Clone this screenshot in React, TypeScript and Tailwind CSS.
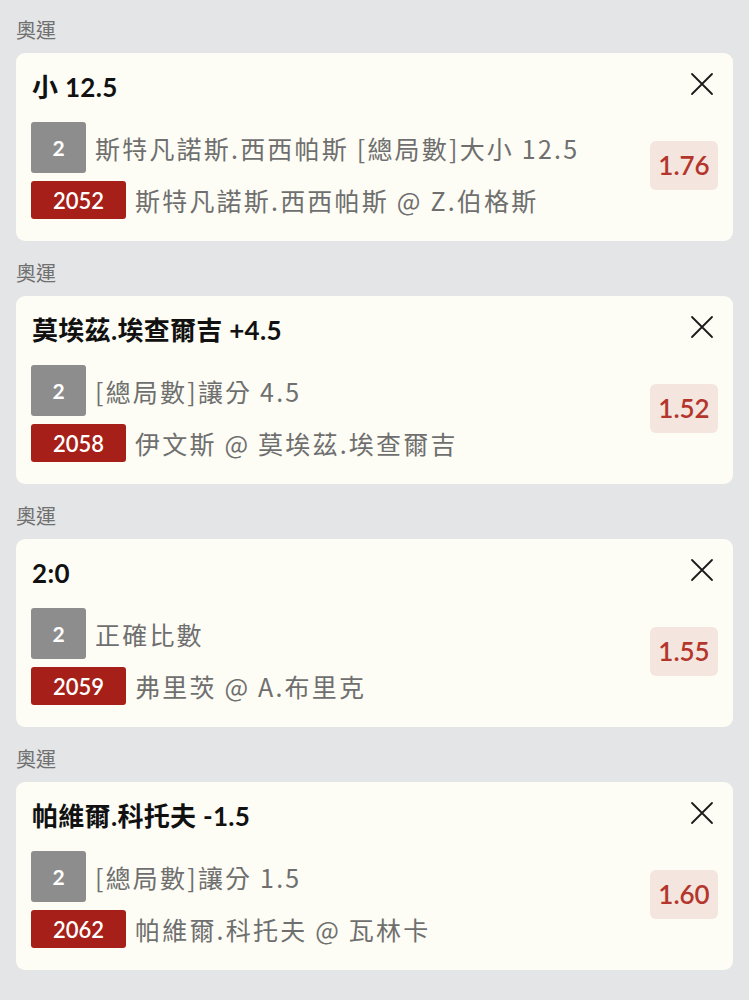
import React from "react";

type Bet = {
  title: string;
  desc: string;
  code: string;
  match: string;
  odds: string;
};

const bets: Bet[] = [
  { title: "小 12.5", desc: "斯特凡諾斯.西西帕斯 [總局數]大小 12.5", code: "2052", match: "斯特凡諾斯.西西帕斯 @ Z.伯格斯", odds: "1.76" },
  { title: "莫埃茲.埃查爾吉 +4.5", desc: "[總局數]讓分 4.5", code: "2058", match: "伊文斯 @ 莫埃茲.埃查爾吉", odds: "1.52" },
  { title: "2:0", desc: "正確比數", code: "2059", match: "弗里茨 @ A.布里克", odds: "1.55" },
  { title: "帕維爾.科托夫 -1.5", desc: "[總局數]讓分 1.5", code: "2062", match: "帕維爾.科托夫 @ 瓦林卡", odds: "1.60" },
];

const rowFont = { fontFamily: "'Noto Sans CJK TC', 'Noto Sans', sans-serif" };

function CloseIcon() {
  return (
    <svg width="24" height="24" viewBox="0 0 24 24" fill="none" stroke="#1a1a1a" strokeWidth="1.8" strokeLinecap="round">
      <path d="M2 2 L22 22 M22 2 L2 22" />
    </svg>
  );
}

function Card({ bet }: { bet: Bet }) {
  return (
    <div className="rounded-[9px] bg-[#fdfdf5] pl-[15px] pr-[15px] pt-[16px] pb-[22px]">
      <div className="flex items-center justify-between h-[36px]">
        <div className="text-[26px] tracking-[0.3px] font-bold text-[#111] leading-[36px] pl-[1px]">{bet.title}</div>
        <div className="mr-[4px] mt-[-6px]">
          <CloseIcon />
        </div>
      </div>
      <div className="mt-[17px] flex items-start justify-between">
        <div className="flex flex-col gap-[8px]">
          <div className="flex items-center gap-[9px]">
            <div className="w-[55px] h-[51px] rounded-[3px] bg-[#8d8d8d] flex items-center justify-center text-white text-[21px] font-bold">
              2
            </div>
            <div className="text-[25px] tracking-[2.2px] text-[#6f6f6f] leading-[34px]" style={rowFont}>
              {bet.desc}
            </div>
          </div>
          <div className="flex items-center gap-[9px]">
            <div className="w-[95px] h-[38px] rounded-[3px] bg-[#a61f18] flex items-center justify-center text-white text-[22px] font-semibold">
              {bet.code}
            </div>
            <div className="text-[25px] tracking-[2.2px] text-[#6f6f6f] leading-[34px]" style={rowFont}>
              {bet.match}
            </div>
          </div>
        </div>
        <div className="mt-[19px] w-[68px] h-[49px] rounded-[6px] bg-[#f4e5de] flex items-center justify-center text-[26px] font-semibold text-[#b3352c]">
          {bet.odds}
        </div>
      </div>
    </div>
  );
}

export default function App() {
  return (
    <div
      className="min-h-[1000px] w-full bg-[#e4e5e7] px-[16px] pt-[16px]"
      style={{ fontFamily: "Lato, 'Noto Sans CJK TC', sans-serif" }}
    >
      {bets.map((b, i) => (
        <div key={i} className={i === 0 ? "" : "mt-[18px]"}>
          <div className="text-[20px] leading-[28px] text-[#707070] mb-[9px]">奧運</div>
          <Card bet={b} />
        </div>
      ))}
    </div>
  );
}
